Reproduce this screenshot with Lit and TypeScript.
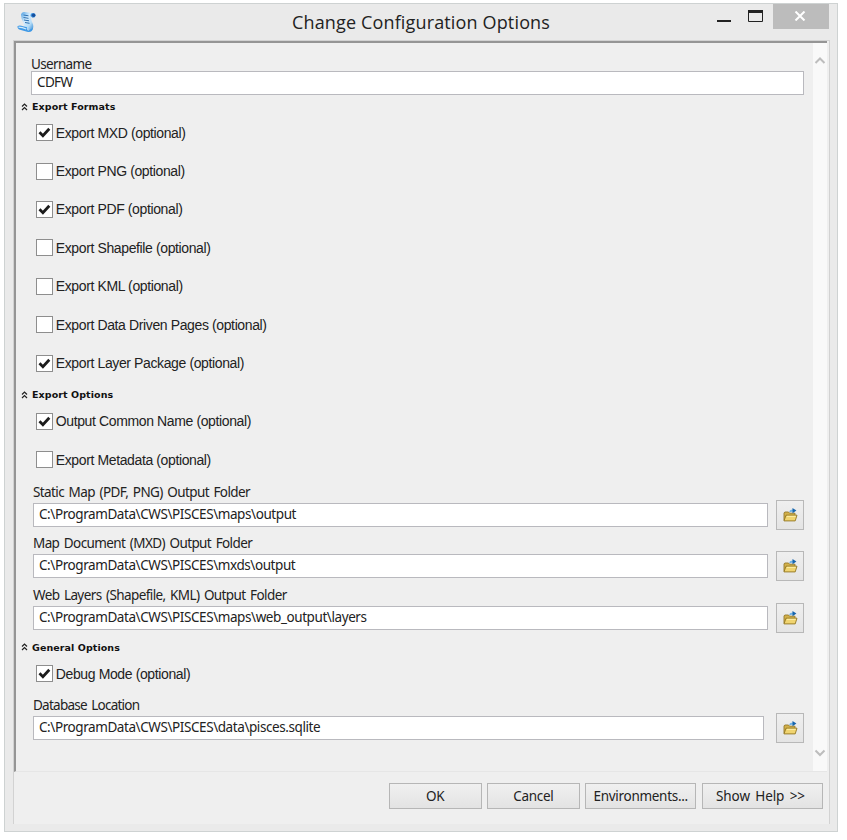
import { LitElement, html, svg, css, nothing } from "lit";
import { customElement, property } from "lit/decorators.js";

const scriptIcon = svg`<svg width="20" height="22" viewBox="0 0 20 22">
  <defs><linearGradient id="p" x1="0" y1="0" x2="1" y2="1">
    <stop offset="0" stop-color="#4a9de2"/><stop offset=".4" stop-color="#d4ecfd"/><stop offset=".7" stop-color="#b4dcf8"/><stop offset="1" stop-color="#2e86d2"/>
  </linearGradient></defs>
  <path d="M4 3.500Q4.500 1 7 1l9.500 1.200q-2.500 1-2.500 4 0 3 2 7 1 4-1.500 6L7 18q1-3-.5-6-2.500-4-2.500-8.500Z" fill="url(#p)"/>
  <path d="M13.500 5Q13.500 2 16 2q2.800.2 2.600 2.700-.4 2.200-3 2.100Z" fill="#3d8fdc"/>
  <circle cx="16.600" cy="4.300" r="1.700" fill="#174f9c"/>
  <path d="M.5 15.200q2-1.200 5.500 0l4 1q-.5 3 1.500 3.200l4.500-2.400q-.5 4.500-5 4L3 18.800Q.1 17.500.5 15.200Z" fill="#3f99e6"/>
  <path d="M1.500 16.200q4 0 7.700 1.800" stroke="#cfeafc" stroke-width="1.300" fill="none"/>
  <path d="M6.500 4l5 .8M6.500 6.500l5 .8M7 9l5 .8M8 11.500l4.500.8" stroke="#2f70b0" stroke-width="1"/>
</svg>`;

const folderIcon = svg`<svg width="15" height="14" viewBox="0 0 15 14">
  <path d="M1 12.500V4.800L2 4h3.500l1 1.200H12v2" fill="#d3b14a" stroke="#94792a" stroke-width=".9"/>
  <path d="M1 12.900 3 7.200h11L12.200 12.900Z" fill="#f0d470" stroke="#927621" stroke-width=".9"/>
  <path d="M3.900 8.300h8.800" stroke="#fff0ac" stroke-width="1"/>
  <path d="M7 3.800Q7.500 2.500 10 2.500" stroke="#6fb2e4" stroke-width="2" fill="none"/>
  <path d="M9.500 0 13.400 2.600 9.500 5.200Z" fill="#1765ad"/>
</svg>`;

@customElement("section-title")
class SectionTitle extends LitElement {
  @property() label = "";
  static styles = css`
    :host { display: flex; align-items: center; height: 13px; gap: 4px; padding-left: 5px; }
    span { font: bold 9.5px/13px "DejaVu Sans", Verdana, sans-serif; letter-spacing: 0.08px; color: #111; white-space: nowrap; }
  `;
  render() {
    return html`<svg width="7" height="8" viewBox="0 0 7 8"><path d="M1 3.500 3.500 1 6 3.500M1 7 3.500 4.500 6 7" fill="none" stroke="#222" stroke-width="1.200"/></svg><span>${this.label}</span>`;
  }
}

@customElement("check-row")
class CheckRow extends LitElement {
  @property() label = "";
  @property({ type: Boolean }) checked = false;
  static styles = css`
    :host { display: flex; align-items: center; height: 38.4px; padding-left: 19.6px; gap: 3.2px; }
    .box { width: 17px; height: 17px; box-sizing: border-box; border: 1px solid #8e8e8e; background: #fff; display: flex; align-items: center; justify-content: center; }
    span { font: 14px/18px "Liberation Sans", Arial, sans-serif; letter-spacing: -0.38px; color: #222; white-space: nowrap; }
  `;
  render() {
    return html`<div class="box">${this.checked
      ? svg`<svg width="13" height="13" viewBox="0 0 13 13"><path d="M1.500 6.300 4.900 9.700 11.300 2.700" fill="none" stroke="#1c1c1c" stroke-width="2.800"/></svg>`
      : nothing}</div><span>${this.label}</span>`;
  }
}

@customElement("path-field")
class PathField extends LitElement {
  @property() label = "";
  @property() value = "";
  @property({ type: Boolean }) short = false;
  static styles = css`
    :host { display: block; padding: 0 9px 0 17px; color: #222; font: 13.5px/16px "Noto Sans", Tahoma, sans-serif; letter-spacing: -0.42px; white-space: nowrap; }
    .label { height: 16px; letter-spacing: -0.6px; word-spacing: 1.6px; }
    .row { display: flex; align-items: center; justify-content: space-between; height: 30px; }
    .input { width: 735px; height: 24px; box-sizing: border-box; border: 1px solid #b9b9be; background: #fff; padding-left: 5px; line-height: 21px; }
    .short { width: 731px; }
    .short-label { letter-spacing: -0.75px; }
    .browse { width: 28px; height: 30px; box-sizing: border-box; border: 1px solid #b8b8b8; background: linear-gradient(#efefef, #e4e4e4); display: flex; align-items: center; justify-content: center; }
  `;
  render() {
    return html`<div class="label ${this.short ? "short-label" : ""}">${this.label}</div>
      <div class="row"><div class="input ${this.short ? "short" : ""}">${this.value}</div><div class="browse">${folderIcon}</div></div>`;
  }
}

@customElement("app-root")
class AppRoot extends LitElement {
  static styles = css`
    :host { display: block; box-sizing: border-box; height: 840px; padding: 3px 0 0 4px; background: #fff; color: #222; }
    .window { width: 834px; height: 829px; box-sizing: border-box; border: 1px solid #ced2d2; background: #eaeaea; padding: 0 8px; }
    .bar { display: flex; height: 36px; align-items: flex-start; }
    .icon { width: 32px; padding: 7px 0 0 4px; box-sizing: border-box; height: 36px; }
    .title { flex: 1; padding-left: 84px; text-align: center; font: 18px/36px "Open Sans", "Segoe UI", sans-serif; color: #222; white-space: nowrap; }
    .title span { letter-spacing: 0.15px; }
    .controls { display: flex; height: 25px; }
    .close { width: 56px; height: 25px; background: #bcbcbc; display: flex; align-items: center; justify-content: center; }
    .close svg { margin: 0 2px 2px 0; }
    .client { height: 784px; width: 817px; box-sizing: border-box; border: 1px solid #d2d2d2; border-bottom: 0; background: #efefef; }
    .panel { display: flex; height: 731px; box-sizing: border-box; border-top: 2px solid #959595; border-left: 2px solid #959595; border-bottom: 1px solid #e6e6e6; margin-right: 2px; }
    .form { flex: 1; display: flex; flex-direction: column; padding-top: 12px; min-width: 0; }
    .user { padding-left: 15px; font: 13.5px/16px "Noto Sans", Tahoma, sans-serif; letter-spacing: -0.65px; margin-bottom: 5px; }
    .name { line-height: 18px; height: 16px; }
    .input { width: 773px; height: 24px; box-sizing: border-box; border: 1px solid #b9b9be; background: #fff; padding-left: 5px; line-height: 21px; }
    .formats { margin-bottom: 0.500px; }
    .options { margin-top: 6px; margin-bottom: 1px; }
    .general { margin-top: 8px; margin-bottom: 0.500px; }
    .checks { margin-bottom: 4.500px; }
    .debug { margin-bottom: 4px; }
    .fields { display: flex; flex-direction: column; gap: 5.700px; }
    .scroll { width: 14px; background: #f9f9f9; display: flex; flex-direction: column; justify-content: space-between; align-items: center; padding: 13px 0; box-sizing: border-box; }
    .footer { display: flex; gap: 5.300px; justify-content: flex-end; padding: 11px 6.500px 0 0; font: 13.5px/25px "Noto Sans", Tahoma, sans-serif; letter-spacing: -0.3px; }
    .btn { height: 26px; box-sizing: border-box; border: 1px solid #b6b6b6; background: linear-gradient(#f0f0f0, #e3e3e3); text-align: center; width: 93px; white-space: nowrap; }
    .env { width: 111px; }
    .help { width: 121px; word-spacing: 2px; letter-spacing: -0.1px; padding-right: 3px; }
  `;
  render() {
    return html`<div class="window">
      <div class="bar">
        <div class="icon">${scriptIcon}</div>
        <div class="title"><span>Change Configuration Options</span></div>
        <div class="controls">
          <svg width="60" height="25" viewBox="0 0 60 25"><path d="M4 17h14" stroke="#222" stroke-width="2"/><path d="M35.500 7v10.500h14V7" fill="none" stroke="#222"/><path d="M35 7.500h15" stroke="#222" stroke-width="3"/></svg>
          <div class="close"><svg width="12" height="10" viewBox="0 0 12 10"><path d="M1.500.5l9 9M10.500.5l-9 9" stroke="#fff" stroke-width="2"/></svg></div>
        </div>
      </div>
      <div class="client">
        <div class="panel">
          <div class="form">
            <div class="user"><div class="name">Username</div><div class="input">CDFW</div></div>
            <section-title class="formats" label="Export Formats"></section-title>
            <check-row label="Export MXD (optional)" checked></check-row>
            <check-row label="Export PNG (optional)"></check-row>
            <check-row label="Export PDF (optional)" checked></check-row>
            <check-row label="Export Shapefile (optional)"></check-row>
            <check-row label="Export KML (optional)"></check-row>
            <check-row label="Export Data Driven Pages (optional)"></check-row>
            <check-row label="Export Layer Package (optional)" checked></check-row>
            <section-title class="options" label="Export Options"></section-title>
            <check-row label="Output Common Name (optional)" checked></check-row>
            <check-row class="checks" label="Export Metadata (optional)"></check-row>
            <div class="fields">
              <path-field label="Static Map (PDF, PNG) Output Folder" value="C:\\ProgramData\\CWS\\PISCES\\maps\\output"></path-field>
              <path-field label="Map Document (MXD) Output Folder" value="C:\\ProgramData\\CWS\\PISCES\\mxds\\output"></path-field>
              <path-field label="Web Layers (Shapefile, KML) Output Folder" value="C:\\ProgramData\\CWS\\PISCES\\maps\\web_output\\layers"></path-field>
            </div>
            <section-title class="general" label="General Options"></section-title>
            <check-row class="debug" label="Debug Mode (optional)" checked></check-row>
            <path-field short label="Database Location" value="C:\\ProgramData\\CWS\\PISCES\\data\\pisces.sqlite"></path-field>
          </div>
          <div class="scroll">
            <svg width="12" height="9" viewBox="0 0 12 9"><path d="M1.500 7 6 2.500l4.500 4.500" fill="none" stroke="#bdbdbd" stroke-width="2"/></svg>
            <svg width="12" height="9" viewBox="0 0 12 9"><path d="M1.500 1.500 6 6l4.500-4.500" fill="none" stroke="#bdbdbd" stroke-width="2"/></svg>
          </div>
        </div>
        <div class="footer">
          <div class="btn">OK</div><div class="btn">Cancel</div><div class="btn env">Environments...</div><div class="btn help">Show Help &gt;&gt;</div>
        </div>
      </div>
    </div>`;
  }
}
